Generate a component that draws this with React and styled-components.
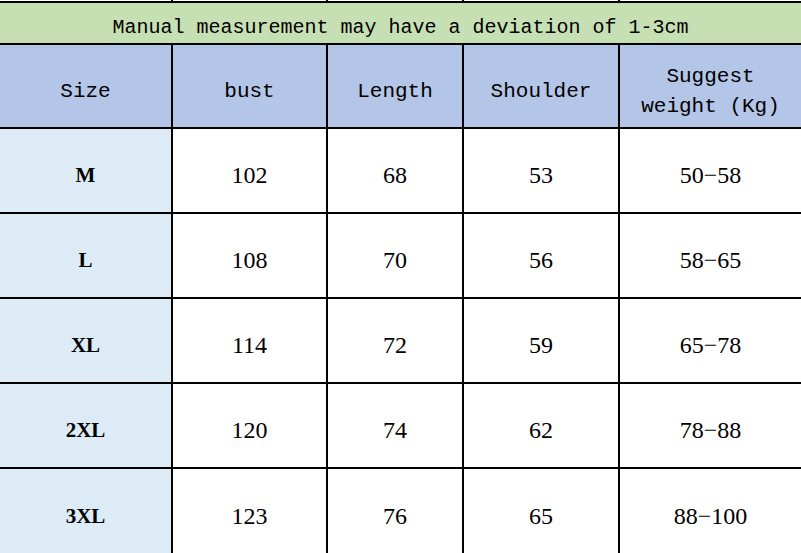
import React from "react";
import styled, { createGlobalStyle } from "styled-components";

const rows = [
  { size: "M", bust: "102", length: "68", shoulder: "53", weight: "50-58" },
  { size: "L", bust: "108", length: "70", shoulder: "56", weight: "58-65" },
  { size: "XL", bust: "114", length: "72", shoulder: "59", weight: "65-78" },
  { size: "2XL", bust: "120", length: "74", shoulder: "62", weight: "78-88" },
  { size: "3XL", bust: "123", length: "76", shoulder: "65", weight: "88-100" },
];

const headers = ["Size", "bust", "Length", "Shoulder"];

const GlobalStyle = createGlobalStyle`
  html, body {
    margin: 0;
    padding: 0;
    background: #ffffff;
  }
`;

const Chart = styled.div`
  display: grid;
  width: 801px;
  height: 553px;
  grid-template-columns: 171px 153px 134px 154px 1fr;
  grid-template-rows: 1px 40px 82px 83px 83px 83px 83px 1fr;
  gap: 2px;
  background: #000000;
  overflow: hidden;
`;

const Spacer = styled.div`
  background: #ffffff;
`;

const Note = styled.div`
  grid-column: 1 / -1;
  background: #c6e0b4;
  display: flex;
  align-items: center;
  justify-content: center;
  padding-top: 8px;
  font-family: "Liberation Mono", "DejaVu Sans Mono", monospace;
  font-size: 20px;
  color: #000000;
`;

const Head = styled.div`
  background: #b4c6e7;
  display: flex;
  align-items: center;
  justify-content: center;
  text-align: center;
  padding-top: 12px;
  font-family: "Liberation Mono", "DejaVu Sans Mono", monospace;
  font-size: 21px;
  line-height: 30px;
  color: #000000;
`;

const Cell = styled.div`
  background: ${({ $size }) => ($size ? "#ddebf7" : "#ffffff")};
  display: flex;
  align-items: center;
  justify-content: center;
  padding-top: 10px;
  font-family: "Liberation Serif", "Times New Roman", serif;
  font-size: ${({ $size }) => ($size ? "21px" : "24px")};
  font-weight: ${({ $size }) => ($size ? 700 : 400)};
  color: #000000;
`;

export default function App() {
  return (
    <>
      <GlobalStyle />
      <Chart>
        {[0, 1, 2, 3, 4].map((i) => (
          <Spacer key={i} />
        ))}
        <Note>Manual measurement may have a deviation of 1-3cm</Note>
        {headers.map((h) => (
          <Head key={h}>{h}</Head>
        ))}
        <Head>
          Suggest
          <br />
          weight (Kg)
        </Head>
        {rows.map((r) => (
          <React.Fragment key={r.size}>
            <Cell $size>{r.size}</Cell>
            <Cell>{r.bust}</Cell>
            <Cell>{r.length}</Cell>
            <Cell>{r.shoulder}</Cell>
            <Cell>{r.weight.replace("-", "\u2212")}</Cell>
          </React.Fragment>
        ))}
      </Chart>
    </>
  );
}
